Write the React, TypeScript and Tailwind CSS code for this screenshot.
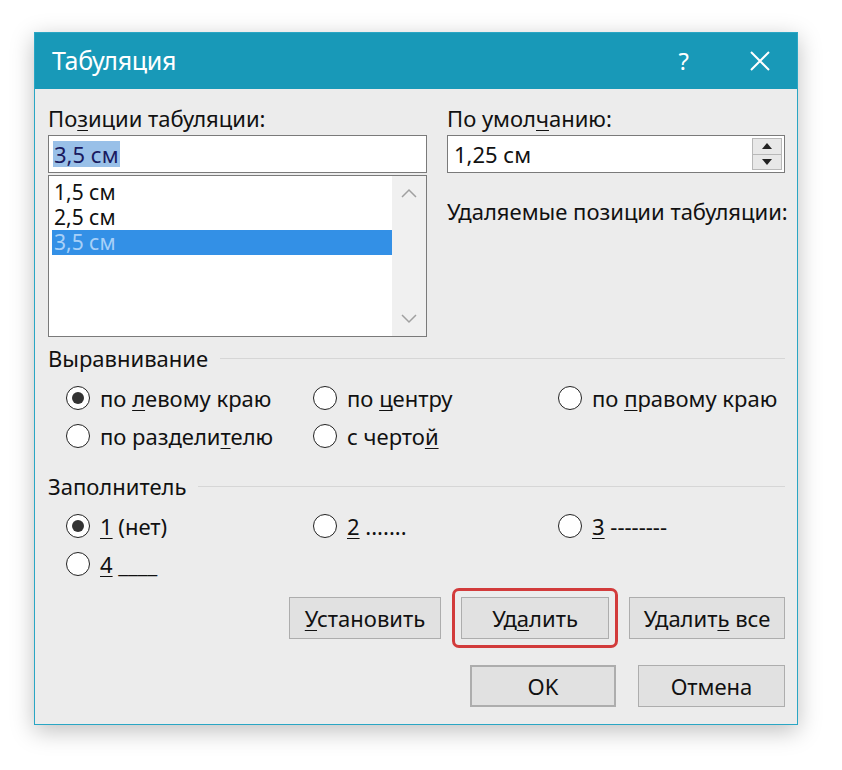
import React from "react";

const font = { fontFamily: '"Noto Sans", "Open Sans", sans-serif' };

function U({ children }: { children: React.ReactNode }) {
  return <span className="underline underline-offset-[3px] decoration-1">{children}</span>;
}

function Radio({ checked, children }: { checked?: boolean; children: React.ReactNode }) {
  return (
    <div className="flex items-center gap-[10px] h-[38px]">
      <span className="w-[24px] h-[24px] rounded-full border-[1.5px] border-[#222] bg-white flex items-center justify-center shrink-0">
        {checked && <span className="w-[12px] h-[12px] rounded-full bg-[#333]" />}
      </span>
      <span className="text-[22px] leading-[28px] text-[#111]">{children}</span>
    </div>
  );
}

function GroupTitle({ children }: { children: React.ReactNode }) {
  return (
    <div className="flex items-center gap-3 h-[26px]">
      <span className="text-[22px] leading-[26px] text-[#111]">{children}</span>
      <div className="flex-1 h-px bg-[#d6d6d6]" />
    </div>
  );
}

function Btn({ children, cls = "" }: { children: React.ReactNode; cls?: string }) {
  return (
    <div
      className={
        "h-[42px] flex items-center justify-center bg-[#e1e1e1] border border-[#adadad] text-[22px] leading-[28px] text-[#111] " +
        cls
      }
    >
      <span>{children}</span>
    </div>
  );
}

export default function App() {
  return (
    <div className="w-[842px] h-[770px] bg-white overflow-hidden" style={font}>
      <div className="ml-[34px] mt-[32px] w-[764px] h-[693px] border border-[#2aa6c4] bg-[#ececec] shadow-[0_6px_22px_rgba(0,0,0,0.25)] flex flex-col">
        {/* title bar */}
        <div className="h-[56px] bg-[#1899b8] flex items-center pl-[17px] pr-[26px] text-white">
          <span className="text-[25px] tracking-[-0.3px] flex-1">Табуляция</span>
          <span className="text-[24px] mr-[60px]">?</span>
          <svg width="22" height="22" viewBox="0 0 22 22">
            <path d="M2 2 L20 20 M20 2 L2 20" stroke="white" strokeWidth="2" />
          </svg>
        </div>

        <div className="flex-1 pl-[13px] pr-[12px] pt-[16px] flex flex-col">
          {/* top columns */}
          <div className="flex gap-[20px]">
            <div className="w-[379px] flex flex-col">
              <div className="text-[22px] text-[#111] h-[30px] leading-[26px]">
                По<U>з</U>иции табуляции:
              </div>
              <div className="h-[38px] bg-white border border-[#7a7a7a] flex items-center px-[4px]">
                <span className="bg-[#99c0e8] text-[#1a1a60] text-[22px] leading-[26px] px-[1px]">3,5 см</span>
              </div>
              <div className="mt-[2px] h-[162px] bg-white border border-[#7a7a7a] flex">
                <div className="flex-1 pt-[4px] pl-[3px] text-[21px] text-[#111]">
                  <div className="h-[25px] leading-[25px] pl-[2px]">1,5 см</div>
                  <div className="h-[25px] leading-[25px] pl-[2px]">2,5 см</div>
                  <div className="h-[25px] leading-[25px] pl-[2px] bg-[#3390e6] text-[#a8d0f8]">3,5 см</div>
                </div>
                <div className="w-[34px] bg-[#f0f0f0] flex flex-col items-center justify-between py-[12px]">
                  <svg width="16" height="10" viewBox="0 0 16 10">
                    <path d="M1 9 L8 2 L15 9" stroke="#a0a0a0" strokeWidth="1.5" fill="none" />
                  </svg>
                  <svg width="16" height="10" viewBox="0 0 16 10">
                    <path d="M1 1 L8 8 L15 1" stroke="#a0a0a0" strokeWidth="1.5" fill="none" />
                  </svg>
                </div>
              </div>
            </div>

            <div className="w-[338px] flex flex-col">
              <div className="text-[22px] text-[#111] h-[30px] leading-[26px]">
                По умол<U>ч</U>анию:
              </div>
              <div className="h-[38px] bg-white border border-[#7a7a7a] flex items-center pl-[6px] pr-[2px]">
                <span className="flex-1 text-[22px] leading-[26px] text-[#111]">1,25 см</span>
                <div className="w-[30px] h-[32px] flex flex-col border border-[#b8b8b8]">
                  <div className="flex-1 bg-[#e8e8e8] border-b border-[#b8b8b8] flex items-center justify-center">
                    <svg width="10" height="6" viewBox="0 0 10 6">
                      <path d="M0 6 L5 0 L10 6 Z" fill="#222" />
                    </svg>
                  </div>
                  <div className="flex-1 bg-[#e8e8e8] flex items-center justify-center">
                    <svg width="10" height="6" viewBox="0 0 10 6">
                      <path d="M0 0 L5 6 L10 0 Z" fill="#222" />
                    </svg>
                  </div>
                </div>
              </div>
              <div className="mt-[24px] text-[22px] leading-[28px] text-[#111] whitespace-nowrap">
                Удаляемые позиции табуляции:
              </div>
            </div>
          </div>

          {/* alignment */}
          <div className="mt-[8px]">
            <GroupTitle>Выравнивание</GroupTitle>
            <div className="mt-[8px] pl-[18px] grid grid-cols-[247px_245px_1fr]">
              <Radio checked>
                по <U>л</U>евому краю
              </Radio>
              <Radio>
                по <U>ц</U>ентру
              </Radio>
              <Radio>
                по <U>п</U>равому краю
              </Radio>
              <Radio>
                по раздели<U>т</U>елю
              </Radio>
              <Radio>
                с черто<U>й</U>
              </Radio>
            </div>
          </div>

          {/* leader */}
          <div className="mt-[18px]">
            <GroupTitle>Заполнитель</GroupTitle>
            <div className="mt-[8px] pl-[18px] grid grid-cols-[247px_245px_1fr]">
              <Radio checked>
                <U>1</U> (нет)
              </Radio>
              <Radio>
                <U>2</U> .......
              </Radio>
              <Radio>
                <U>3</U> --------
              </Radio>
              <Radio>
                <U>4</U> ____
              </Radio>
            </div>
          </div>

          {/* buttons */}
          <div className="mt-[5px] flex justify-end items-center gap-[20px]">
            <Btn cls="w-[152px]">
              <U>У</U>становить
            </Btn>
            <div className="p-[6px] rounded-[7px] border-[3px] border-[#d23b3b] -mx-[9px]">
              <Btn cls="w-[148px]">
                Уд<U>а</U>лить
              </Btn>
            </div>
            <Btn cls="w-[156px]">
              Удалит<U>ь</U> все
            </Btn>
          </div>
          <div className="mt-[17px] flex justify-end gap-[22px]">
            <Btn cls="w-[146px] border-2 border-[#2a7fd6]">OK</Btn>
            <Btn cls="w-[147px]">Отмена</Btn>
          </div>
        </div>
      </div>
    </div>
  );
}
